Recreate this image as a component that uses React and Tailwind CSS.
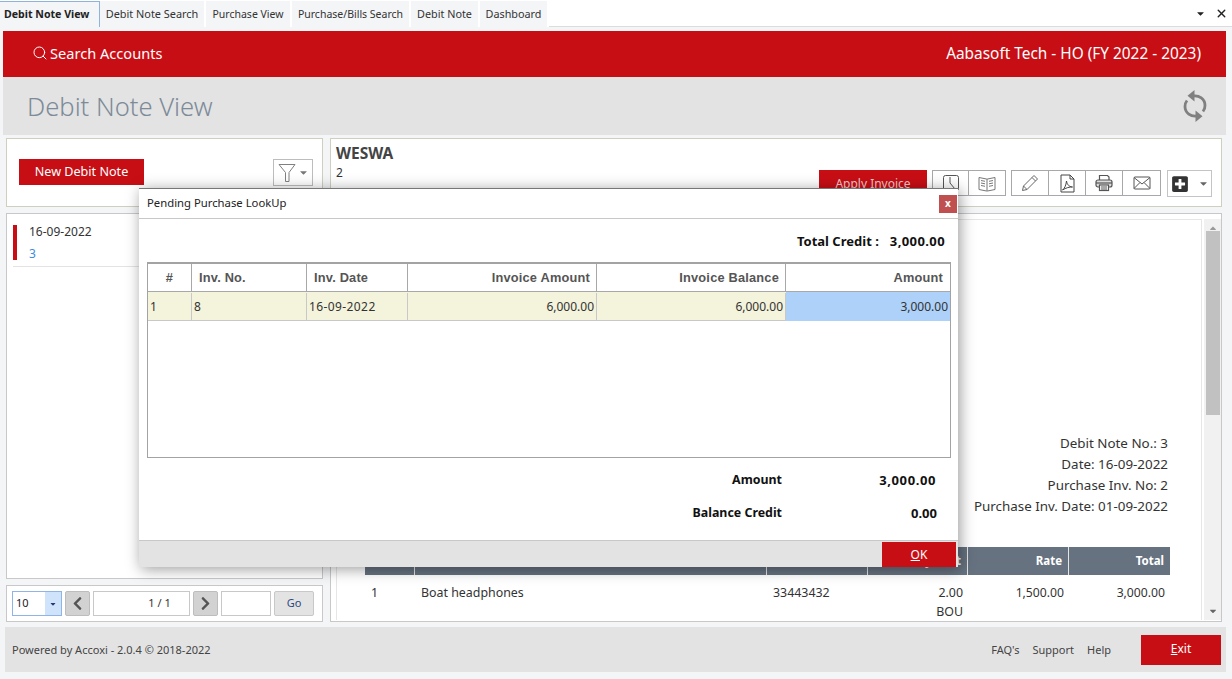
import React from "react";
import { Search, X } from "lucide-react";
import { FaPlusSquare, FaChevronLeft, FaChevronRight, FaCaretDown, FaCaretUp } from "react-icons/fa";

const tabs = [
  ["Debit Note View", "w-[100px] justify-start pl-[4px] text-[10.6px]", true],
  ["Debit Note Search", "w-[106px] justify-center text-[10.9px]"],
  ["Purchase View", "w-[86px] justify-center text-[10.5px]"],
  ["Purchase/Bills Search", "w-[119px] justify-center text-[10.5px]"],
  ["Debit Note", "w-[69px] justify-center text-[10.8px]"],
  ["Dashboard", "w-[69px] justify-center text-[10.8px]"],
];

const IconBtn = ({ children, w = "w-[37px]" }) => (
  <div className={`${w} h-full flex items-center justify-center border-r border-[#a8a8a8] last:border-r-0 text-[#555]`}>{children}</div>
);

const Caret = ({ className = "" }) => <FaCaretDown className={className} size={11} />;

const FunnelIcon = () => (
  <svg width="18" height="20" viewBox="0 0 18 20" fill="none" stroke="#808080" strokeWidth="1">
    <path d="M1 1.5h16L11 9.5v9H7.5v-9z" />
  </svg>
);
const ClockBox = () => (
  <svg width="18" height="18" viewBox="0 0 18 18" fill="none" stroke="#555" strokeWidth="1">
    <rect x="1.5" y="1.5" width="15" height="15" rx="2" />
    <path d="M8 3v6l5 6" />
  </svg>
);
const BookIcon = () => (
  <svg width="18" height="17" viewBox="0 0 18 17" fill="none" stroke="#777" strokeWidth="1">
    <path d="M1 2.5l7.500 1.500 1 0 7.500-1.500v12l-7.500 1.500h-1l-7.500-1.500z" />
    <path d="M9 4v12M3 5.500l4 .8M3 8l4 .8M3 10.500l4 .8M11 6.300l4-.8M11 8.800l4-.8M11 11.300l4-.8" />
  </svg>
);
const PencilIcon = () => (
  <svg width="18" height="18" viewBox="0 0 18 18" fill="none" stroke="#666" strokeWidth="1">
    <path d="M13 1.500l3.500 3.500L6 15.500l-4.500 1 1-4.500z" />
    <path d="M11 3.500l3.500 3.500M2.500 12l3.500 3.500" />
  </svg>
);
const PdfIcon = () => (
  <svg width="15" height="19" viewBox="0 0 15 19" fill="none" stroke="#444" strokeWidth="1">
    <path d="M1 1h9l4 4v13H1z" />
    <path d="M10 1v4h4" />
    <path d="M2.500 16c2-1.500 3.500-4.500 4-9 .8 4 2.500 5.500 6 6-3-.2-6.500.8-10 3z" />
  </svg>
);
const PrinterIcon = () => (
  <svg width="18" height="18" viewBox="0 0 18 18" fill="none" stroke="#555" strokeWidth="1.200">
    <path d="M4.500 6V1.500h8L14 3v3" />
    <rect x="1" y="6" width="16" height="7" rx="2" fill="#ddd" />
    <path d="M1 9h16" />
    <rect x="4.500" y="11" width="9" height="5.500" fill="#fff" />
    <path d="M6 13h6M6 15h6" />
  </svg>
);
const MailIcon = () => (
  <svg width="18" height="14" viewBox="0 0 18 14" fill="none" stroke="#555" strokeWidth="1">
    <rect x="1" y="1" width="16" height="12" rx="1" />
    <path d="M1 1.500l8 6.500 8-6.500M1 12.500l6-6M17 12.500l-6-6" />
  </svg>
);
const RefreshIcon = () => (
  <svg width="28" height="34" viewBox="0 0 28 34" fill="none" stroke="#808080" strokeWidth="2.800">
    <path d="M12 7c6-1 12 3 12 9.500 0 2.500-.8 4.500-2 6" />
    <path d="M16 27c-6 1-12-3-12-9.500 0-2.500.8-4.500 2-6" />
    <path d="M13.500 1L6.500 6.800l7 5.700z" fill="#808080" stroke="none" />
    <path d="M14.500 33l7-5.800-7-5.700z" fill="#808080" stroke="none" />
  </svg>
);

const gridCols = "grid grid-cols-[44px_115px_101px_189px_189px_164px]";
const docCols = "grid grid-cols-[50px_352px_101px_100px_101px_101px]";

export default function App() {
  return (
    <div className="relative w-[1232px] h-[679px] overflow-hidden bg-[#f3f5f7] text-[#333] font-['Noto_Sans',sans-serif]">
      {/* Tabs */}
      <div className="h-[27px] pt-px flex bg-white border-b border-[#dcdcdc]">
        <div className="flex">
          {tabs.map(([t, w, active]) => (
            <div key={t} className={`${w} h-[26px] pt-[1px] flex items-center whitespace-nowrap ${active ? "bg-[#f3f5f7] border-r border-t border-[#8fb4dc] font-bold text-[#222]" : "bg-[#f3f5f7] border-r-2 border-white text-[#333]"}`}>{t}</div>
          ))}
        </div>
        <div className="ml-auto flex items-center gap-[9px] pr-[4px] text-[#222]">
          <FaCaretDown size={11} />
          <X size={13} strokeWidth={2.5} />
        </div>
      </div>

      {/* Red bar */}
      <div className="mt-[4px] ml-[3px] w-[1223px] h-[46px] pb-[1px] bg-[#c80e15] flex items-center justify-between pl-[29px] pr-[25px] text-white">
        <div className="flex items-center gap-[2px] text-[14.6px]">
          <Search size={16} strokeWidth={1.5} />
          <span>Search Accounts</span>
        </div>
        <div className="text-[15.4px]">Aabasoft Tech - HO (FY 2022 - 2023)</div>
      </div>

      {/* Title bar */}
      <div className="ml-[3px] w-[1223px] h-[58px] bg-[#e3e3e3] flex items-center justify-between pl-[24px] pr-[17px]">
        <h1 className="text-[25.6px] pt-[2px] font-light text-[#7d8b99] leading-none">Debit Note View</h1>
        <RefreshIcon />
      </div>

      {/* Top panels */}
      <div className="mt-[3px] ml-[6px] flex gap-[7px] h-[69px]">
        <div className="w-[317px] bg-white border border-[#cfcfc0] flex pl-[12px] pt-[20px] pr-[9px]">
          <div className="w-[125px] h-[26px] pt-[1px] bg-[#c80e15] text-white text-[12.6px] flex items-center justify-center">New Debit Note</div>
          <div className="ml-auto w-[40px] h-[27px] border border-[#bdbdbd] flex items-center justify-center gap-[2px] text-[#777]">
            <FunnelIcon />
            <Caret />
          </div>
        </div>
        <div className="w-[892px] bg-white border border-[#cfcfc0] flex justify-between pl-[5px] pr-[9px]">
          <div className="pt-[4px]">
            <div className="text-[15.500px] font-bold text-[#444] leading-[20px]">WESWA</div>
            <div className="text-[12px] leading-[18px] mt-[1px]">2</div>
          </div>
          <div className="flex items-start gap-[5px] pt-[31px]">
            <div className="w-[108px] h-[26px] pt-[2px] bg-[#c80e15] text-[#f3c9c9] text-[12px] flex items-center justify-center">Apply Invoice</div>
            <div className="flex h-[26px] border border-[#a8a8a8] bg-white">
              <IconBtn w="w-[36px]"><ClockBox /></IconBtn>
              <IconBtn w="w-[36px]"><BookIcon /></IconBtn>
            </div>
            <div className="flex h-[26px] border border-[#a8a8a8] bg-white">
              <IconBtn><PencilIcon /></IconBtn>
              <IconBtn><PdfIcon /></IconBtn>
              <IconBtn><PrinterIcon /></IconBtn>
              <IconBtn><MailIcon /></IconBtn>
            </div>
            <div className="flex h-[27px] w-[45px] ml-[1px] border border-[#c4c4c4] bg-white items-center justify-center gap-[9px] text-[#333]">
              <FaPlusSquare size={18} />
              <Caret className="text-[#666]" />
            </div>
          </div>
        </div>
      </div>

      {/* Main panels */}
      <div className="mt-[6px] ml-[6px] flex gap-[7px] h-[409px]">
        <div className="w-[317px] flex flex-col gap-[6px]">
          <div className="h-[366px] bg-white border border-[#c8c8c8] pl-[6px] pt-[11px] pr-[2px]">
            <div className="flex h-[42px] border-b border-[#e3e3e3]">
              <div className="w-[4px] h-[35px] bg-[#c80e15]" />
              <div className="pl-[12px] -mt-[4px] text-[12px] leading-[22px]">
                <div className="text-[#333]">16-09-2022</div>
                <div className="text-[#3b8be0]">3</div>
              </div>
            </div>
          </div>
          <div className="h-[37px] bg-white border border-[#c8c8c8] flex items-center pl-[5px] gap-[3px]">
            <div className="w-[50px] h-[25px] border border-[#8fb4e8] flex text-[11px] text-[#222]">
              <span className="flex-1 pl-[3px] leading-[22px]">10</span>
              <span className="w-[16px] bg-[#cfe3fb] flex items-center justify-center text-[#1f3b7a]"><FaCaretDown size={8} /></span>
            </div>
            <div className="w-[25px] h-[25px] bg-[#d2d2d2] border border-[#bdbdbd] rounded-[2px] flex items-center justify-center text-[#555]"><FaChevronLeft size={15} /></div>
            <div className="w-[97px] h-[25px] border border-[#c8c8c8] text-[11px] flex items-center justify-center pl-[36px] text-[#333]">1 / 1</div>
            <div className="w-[25px] h-[25px] bg-[#d2d2d2] border border-[#bdbdbd] rounded-[2px] flex items-center justify-center text-[#555]"><FaChevronRight size={15} /></div>
            <div className="w-[50px] h-[25px] border border-[#c8c8c8]" />
            <div className="w-[40px] h-[25px] bg-[#e3e3e3] border border-[#c8c8c8] rounded-[2px] text-[11px] text-[#2b4a80] flex items-center justify-center">Go</div>
          </div>
        </div>

        <div className="w-[892px] h-[409px] bg-white border border-[#c8c8c8] flex pl-[5px] pt-[5px] pb-[1px]">
          <div className="w-[866px] border border-b-0 border-[#e6e6e6] overflow-hidden flex flex-col items-end pr-[33px] pt-[213px]">
            <div className="text-[13.400px] leading-[21px] text-right text-[#333]">
              <div>Debit Note No.: 3</div>
              <div>Date: 16-09-2022</div>
              <div>Purchase Inv. No: 2</div>
              <div>Purchase Inv. Date: 01-09-2022</div>
            </div>
            <div className="mt-[30px] -mr-[2px] w-[805px]">
              <div className={`h-[28px] ${docCols} bg-[#667280] text-white text-[11.500px] font-bold`}>
                <div className="border-r border-[#e5e5e5]" />
                <div className="border-r border-[#e5e5e5]" />
                <div className="border-r border-[#e5e5e5]" />
                <div className="border-r border-[#e5e5e5] flex items-center justify-end pr-[6px]">Qty/Unit</div>
                <div className="border-r border-[#e5e5e5] flex items-center justify-end pr-[6px]">Rate</div>
                <div className="flex items-center justify-end pr-[6px]">Total</div>
              </div>
              <div className={`${docCols} text-[12.400px] leading-[19px] pt-[8px]`}>
                <div className="pl-[6px]">1</div>
                <div className="pl-[6px]">Boat headphones</div>
                <div className="pl-[6px]">33443432</div>
                <div className="text-right pr-[5px]">2.00<br />BOU</div>
                <div className="text-right pr-[5px] text-[12.200px]">1,500.00</div>
                <div className="text-right pr-[5px] text-[12.200px]">3,000.00</div>
              </div>
            </div>
          </div>
          <div className="ml-auto w-[17px] bg-[#f1f1f1] flex flex-col items-center text-[#666]">
            <FaCaretUp size={10} className="mt-[4px] text-[#999]" />
            <div className="w-[14px] h-[184px] -mt-[2px] bg-[#c1c1c1]" />
            <FaCaretDown size={10} className="mt-auto mb-[4px]" />
          </div>
        </div>
      </div>

      {/* Footer */}
      <div className="mt-[5px] ml-[5px] w-[1221px] h-[45px] bg-[#e3e3e3] flex items-center pl-[7px] pr-[5px]">
        <span className="text-[11px] text-[#444] pt-[1px]">Powered by Accoxi - 2.0.4 © 2018-2022</span>
        <div className="ml-auto flex items-center text-[11px] text-[#444] gap-[13px] pt-[1px]">
          <span>FAQ's</span><span>Support</span><span>Help</span>
        </div>
        <div className="ml-[30px] w-[80px] h-[30px] bg-[#c80e15] text-white text-[12px] flex items-center justify-center pb-[2px]"><span><u>E</u>xit</span></div>
      </div>

      {/* Modal */}
      <div className="absolute left-[139px] top-[188px] w-[819px] h-[379px] bg-white border-t border-[#777] shadow-[2px_2px_14px_rgba(0,0,0,0.4)] flex flex-col">
        <div className="h-[30px] shrink-0 border-b border-[#c8c8c8] flex items-center justify-between pl-[8px] pr-[1px]">
          <span className="text-[11.300px] text-[#222]">Pending Purchase LookUp</span>
          <span className="w-[18px] h-[18px] bg-[#c0504f] text-white text-[10px] font-bold flex items-center justify-center">x</span>
        </div>
        <div className="h-[43px] shrink-0 flex items-center justify-end pr-[13px] pt-[2px] text-[13px] font-bold text-[#111]">
          <span>Total Credit :</span><span className="ml-[11px] tracking-[0.4px]">3,000.00</span>
        </div>
        <div className="ml-[8px] h-[196px] shrink-0 border-2 border-b border-x border-[#a3a3a3] w-[804px]">
          <div className={`${gridCols} h-[28px] text-[12.800px] font-bold text-[#555] border-b border-[#a8a8a8] font-['Liberation_Sans',sans-serif] tracking-[0.2px]`}>
            <div className="border-r border-[#a8a8a8] flex items-center justify-center">#</div>
            <div className="border-r border-[#a8a8a8] flex items-center pl-[7px]">Inv. No.</div>
            <div className="border-r border-[#a8a8a8] flex items-center pl-[7px]">Inv. Date</div>
            <div className="border-r border-[#a8a8a8] flex items-center justify-end pr-[6px]">Invoice Amount</div>
            <div className="border-r border-[#a8a8a8] flex items-center justify-end pr-[6px]">Invoice Balance</div>
            <div className="flex items-center justify-end pr-[7px]">Amount</div>
          </div>
          <div className={`${gridCols} h-[29px] pt-[1px] text-[12px] text-[#333] border-b border-[#c8c8c8] bg-[#f4f4dc]`}>
            <div className="border-r border-[#c8c8c8] flex items-center pl-[2px]">1</div>
            <div className="border-r border-[#c8c8c8] flex items-center pl-[2px]">8</div>
            <div className="border-r border-[#c8c8c8] flex items-center pl-[2px] tracking-[0.4px]">16-09-2022</div>
            <div className="border-r border-[#c8c8c8] flex items-center justify-end pr-[2px]">6,000.00</div>
            <div className="border-r border-[#c8c8c8] flex items-center justify-end pr-[2px]">6,000.00</div>
            <div className="bg-[#add1f9] flex items-center justify-end pr-[2px] -mt-px -mb-px">3,000.00</div>
          </div>
        </div>
        <div className="flex-1 text-[12.400px] font-bold text-[#111]">
          <div className="flex justify-end pr-[22px] pt-[13px] leading-[18px]">
            <span>Amount</span><span className="w-[154px] text-right text-[13px] tracking-[0.6px]">3,000.00</span>
          </div>
          <div className="flex justify-end pr-[21px] pt-[15px] leading-[18px]">
            <span>Balance Credit</span><span className="w-[155px] text-right text-[13px]">0.00</span>
          </div>
        </div>
        <div className="h-[27px] shrink-0 bg-[#e3e3e3] border-t border-[#c8c8c8] flex justify-end pr-[2px] pt-[1px]">
          <div className="w-[74px] h-[25px] bg-[#c80e15] text-white text-[12px] flex items-center justify-center"><span><u>O</u>K</span></div>
        </div>
      </div>
    </div>
  );
}
